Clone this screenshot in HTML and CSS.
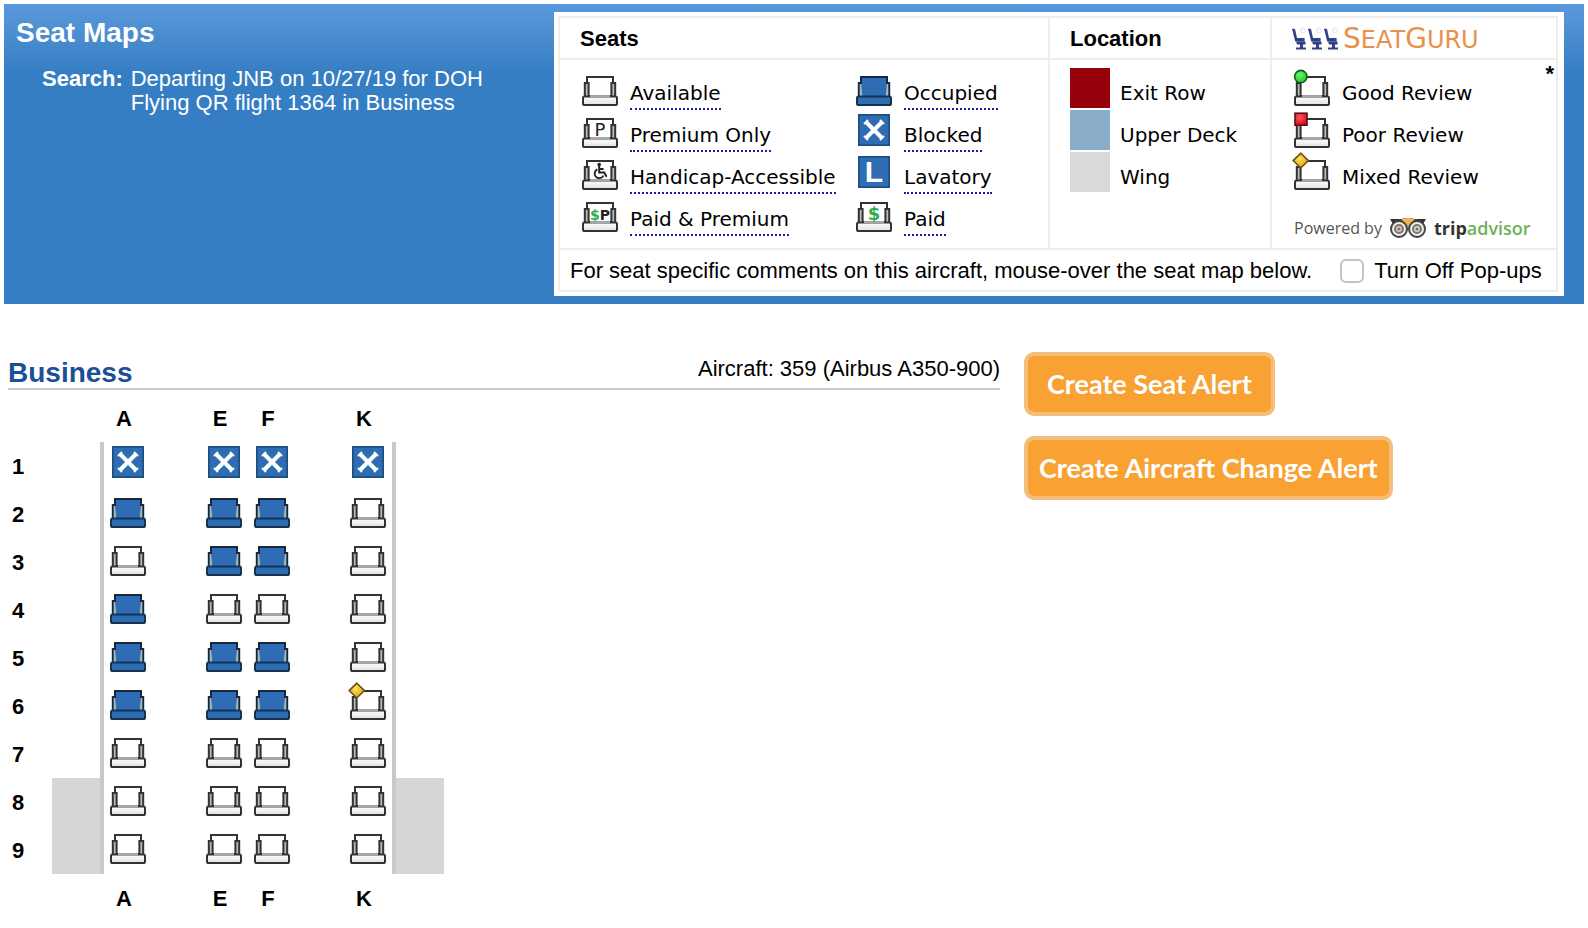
FILE: index.html
```
<!DOCTYPE html>
<html lang="en">
<head>
    <meta charset="UTF-8">
    <meta name="viewport" content="width=device-width, initial-scale=1.0">
    <title>Seat Maps</title>
    <link rel="stylesheet" href="styles.css">
</head>
<body>

    <!-- Icon shapes, reused by the legend and the seat map -->
    <svg class="sprite" aria-hidden="true">
        <defs>
            <linearGradient id="cushion" x1="0" y1="0" x2="0" y2="1">
                <stop offset="0" stop-color="#ffffff"/>
                <stop offset="1" stop-color="#e2e2e2"/>
            </linearGradient>
            <radialGradient id="gold" cx="0.4" cy="0.35" r="0.7">
                <stop offset="0" stop-color="#ffe35a"/>
                <stop offset="1" stop-color="#d9a010"/>
            </radialGradient>
            <radialGradient id="green" cx="0.4" cy="0.35" r="0.7">
                <stop offset="0" stop-color="#6cf56c"/>
                <stop offset="1" stop-color="#1fc42c"/>
            </radialGradient>
            <radialGradient id="red" cx="0.4" cy="0.35" r="0.7">
                <stop offset="0" stop-color="#ff5560"/>
                <stop offset="1" stop-color="#d20a18"/>
            </radialGradient>
        </defs>
        <symbol id="open" viewBox="0 0 20 20">
            <path d="M3.5 8V4.5h13V8" fill="#fff" stroke="#333"/>
            <path d="M2.4 14.5V7.5H4.3V13.5L5.2 14.5M17.6 14.5V7.5H15.7V13.5L14.800 14.5" fill="#bbb" stroke="#333"/>
            <rect x="1.5" y="14.2" width="17" height="4.3" rx="0.8" fill="url(#cushion)" stroke="#333"/>
            <path d="M5 14.2H15" stroke="#aaa" stroke-width="1.1"/>
        </symbol>
        <symbol id="taken" viewBox="0 0 20 20">
            <rect x="3" y="6" width="14" height="9" fill="#a9b8c6"/>
            <path d="M3.5 7V4.5h13V7l-.6 7H4.1z" fill="#2e6db3"/>
            <path d="M2.4 14.5V7.5H3.5V4.5H16.5V7.5H17.6V14.5" fill="none" stroke="#152a42"/>
            <rect x="1.5" y="14.3" width="17" height="4.2" rx="0.8" fill="#2e6db3" stroke="#16324f"/>
        </symbol>
        <symbol id="box" viewBox="0 0 20 20">
            <rect x="2.4" y="2.4" width="15.2" height="15.2" fill="#2e6db3" stroke="#1f4c80" stroke-width="0.8"/>
        </symbol>
        <symbol id="blocked" viewBox="0 0 20 20">
            <use href="#box"/>
            <path d="M6 6l8 8M14 6l-8 8" stroke="#fff" stroke-width="2"/>
            <path d="M5 7l2-2M15 7l-2-2M5 13l2 2M15 13l-2 2" stroke="#fff" stroke-width="1"/>
        </symbol>
        <symbol id="mixed" viewBox="0 0 20 20">
            <use href="#open"/>
            <path d="M4.400 .6L8.200 4.300 4.400 8 .600 4.300z" fill="url(#gold)" stroke="#6b5314" stroke-width="0.8"/>
        </symbol>
        <symbol id="good" viewBox="0 0 20 20">
            <use href="#open"/>
            <circle cx="4.4" cy="4.3" r="3.1" fill="url(#green)" stroke="#155c1d" stroke-width="0.8"/>
        </symbol>
        <symbol id="poor" viewBox="0 0 20 20">
            <use href="#open"/>
            <rect x="1.5" y="1.6" width="6" height="6" fill="url(#red)" stroke="#5c1015" stroke-width="0.8"/>
        </symbol>
    </svg>

    <header class="banner">
        <div class="search">
            <h1>Seat Maps</h1>
            <dl>
                <dt>Search:</dt>
                <dd>Departing JNB on 10/27/19 for DOH<br>Flying QR flight 1364 in Business</dd>
            </dl>
        </div>

        <div class="legend">
            <div class="legend-grid">
                <h2>Seats</h2>
                <h2>Location</h2>
                <div class="seatguru">
                    <svg class="chairs" viewBox="0 0 48 24" aria-hidden="true">
                        <g id="chair">
                            <path d="M0 1.500l3 .5 2 9h7.600v3.500H3.200z" fill="#2f4088"/>
                            <path d="M4 14.500h9.500v3H5zM8 17h3v4H8zM4 20.500h10v2H4z" fill="#2f4088"/>
                            <circle cx="11" cy="3.500" r="2.300" fill="none" stroke="#dfe3ea"/>
                        </g>
                        <use href="#chair" x="16"/>
                        <use href="#chair" x="32"/>
                    </svg>
                    <span class="guru"><b>S</b>EAT<b>G</b>URU</span>
                </div>

                <div class="cell seats">
                    <div class="item">
                        <svg class="icon"><use href="#open"/></svg>
                        <a href="#">Available</a>
                    </div>
                    <div class="item">
                        <svg class="icon"><use href="#taken"/></svg>
                        <a href="#">Occupied</a>
                    </div>
                    <div class="item">
                        <svg class="icon" viewBox="0 0 20 20"><use href="#open"/><text class="mark" x="10" y="13">P</text></svg>
                        <a href="#">Premium Only</a>
                    </div>
                    <div class="item">
                        <svg class="icon"><use href="#blocked"/></svg>
                        <a href="#">Blocked</a>
                    </div>
                    <div class="item">
                        <svg class="icon" viewBox="0 0 20 20">
                            <use href="#open"/>
                            <circle cx="9.6" cy="6.3" r="0.9" fill="#222"/>
                            <path d="M9.6 7v3.2h2.5l1.2 2.2M9.6 8.5h2.2" fill="none" stroke="#222"/>
                            <path d="M8.7 8.7a2.3 2.3 0 1 0 3 3.1" fill="none" stroke="#222" stroke-width="0.9"/>
                        </svg>
                        <a href="#">Handicap-Accessible</a>
                    </div>
                    <div class="item">
                        <svg class="icon" viewBox="0 0 20 20"><use href="#box"/><text class="mark lav" x="10" y="15">L</text></svg>
                        <a href="#">Lavatory</a>
                    </div>
                    <div class="item">
                        <svg class="icon" viewBox="0 0 20 20"><use href="#open"/><text class="mark small" x="10" y="13"><tspan class="cash">$</tspan>P</text></svg>
                        <a href="#">Paid &amp; Premium</a>
                    </div>
                    <div class="item">
                        <svg class="icon" viewBox="0 0 20 20"><use href="#open"/><text class="mark cash" x="10" y="13">$</text></svg>
                        <a href="#">Paid</a>
                    </div>
                </div>

                <div class="cell">
                    <div class="item"><i class="swatch exit"></i><span>Exit Row</span></div>
                    <div class="item"><i class="swatch upper"></i><span>Upper Deck</span></div>
                    <div class="item"><i class="swatch wing-color"></i><span>Wing</span></div>
                </div>

                <div class="cell reviews">
                    <b class="star">*</b>
                    <div class="item"><svg class="icon"><use href="#good"/></svg><span>Good Review</span></div>
                    <div class="item"><svg class="icon"><use href="#poor"/></svg><span>Poor Review</span></div>
                    <div class="item"><svg class="icon"><use href="#mixed"/></svg><span>Mixed Review</span></div>
                    <div class="powered">
                        <span>Powered by</span>
                        <svg class="owl" viewBox="0 0 38 20" aria-hidden="true">
                            <path d="M1 1h11q7-2 14 0h11l-3 5H4z" fill="#333"/>
                            <path d="M12 1q7-2 14 0l-7 8z" fill="#e9b94c"/>
                            <circle cx="10" cy="11" r="8" fill="#eee" stroke="#444" stroke-width="2"/>
                            <circle cx="28" cy="11" r="8" fill="#eee" stroke="#444" stroke-width="2"/>
                            <circle cx="10" cy="11" r="4" fill="#e3c4bd" stroke="#777" stroke-width="2"/>
                            <circle cx="28" cy="11" r="4" fill="#cfdccb" stroke="#777" stroke-width="2"/>
                            <circle cx="10" cy="11" r="1.500" fill="#a0625a"/>
                            <circle cx="28" cy="11" r="1.500" fill="#5d7d5b"/>
                        </svg>
                        <span class="trip">trip<span class="advisor">advisor</span></span>
                    </div>
                </div>

                <div class="note">
                    <span>For seat specific comments on this aircraft, mouse-over the seat map below.</span>
                    <input type="checkbox" id="popups">
                    <label for="popups">Turn Off Pop-ups</label>
                </div>
            </div>
        </div>
    </header>

    <main>
        <section class="cabin">
            <div class="cabin-title">
                <h2>Business</h2>
                <span>Aircraft: 359 (Airbus A350-900)</span>
            </div>

            <table class="map">
                <colgroup>
                    <col class="num"><col class="side"><col span="6"><col class="side">
                </colgroup>
                <thead>
                    <tr><td></td><td></td><th>A</th><td></td><th>E</th><th>F</th><td></td><th>K</th><td></td></tr>
                </thead>
                <tbody>
                    <tr>
                        <th>1</th><td class="left"></td>
                        <td><svg class="icon"><use href="#blocked"/></svg></td><td></td>
                        <td><svg class="icon"><use href="#blocked"/></svg></td>
                        <td><svg class="icon"><use href="#blocked"/></svg></td><td></td>
                        <td><svg class="icon"><use href="#blocked"/></svg></td><td class="right"></td>
                    </tr>
                    <tr>
                        <th>2</th><td class="left"></td>
                        <td><svg class="icon"><use href="#taken"/></svg></td><td></td>
                        <td><svg class="icon"><use href="#taken"/></svg></td>
                        <td><svg class="icon"><use href="#taken"/></svg></td><td></td>
                        <td><svg class="icon"><use href="#open"/></svg></td><td class="right"></td>
                    </tr>
                    <tr>
                        <th>3</th><td class="left"></td>
                        <td><svg class="icon"><use href="#open"/></svg></td><td></td>
                        <td><svg class="icon"><use href="#taken"/></svg></td>
                        <td><svg class="icon"><use href="#taken"/></svg></td><td></td>
                        <td><svg class="icon"><use href="#open"/></svg></td><td class="right"></td>
                    </tr>
                    <tr>
                        <th>4</th><td class="left"></td>
                        <td><svg class="icon"><use href="#taken"/></svg></td><td></td>
                        <td><svg class="icon"><use href="#open"/></svg></td>
                        <td><svg class="icon"><use href="#open"/></svg></td><td></td>
                        <td><svg class="icon"><use href="#open"/></svg></td><td class="right"></td>
                    </tr>
                    <tr>
                        <th>5</th><td class="left"></td>
                        <td><svg class="icon"><use href="#taken"/></svg></td><td></td>
                        <td><svg class="icon"><use href="#taken"/></svg></td>
                        <td><svg class="icon"><use href="#taken"/></svg></td><td></td>
                        <td><svg class="icon"><use href="#open"/></svg></td><td class="right"></td>
                    </tr>
                    <tr>
                        <th>6</th><td class="left"></td>
                        <td><svg class="icon"><use href="#taken"/></svg></td><td></td>
                        <td><svg class="icon"><use href="#taken"/></svg></td>
                        <td><svg class="icon"><use href="#taken"/></svg></td><td></td>
                        <td><svg class="icon"><use href="#mixed"/></svg></td><td class="right"></td>
                    </tr>
                    <tr>
                        <th>7</th><td class="left"></td>
                        <td><svg class="icon"><use href="#open"/></svg></td><td></td>
                        <td><svg class="icon"><use href="#open"/></svg></td>
                        <td><svg class="icon"><use href="#open"/></svg></td><td></td>
                        <td><svg class="icon"><use href="#open"/></svg></td><td class="right"></td>
                    </tr>
                    <tr>
                        <th>8</th><td class="left wing"></td>
                        <td><svg class="icon"><use href="#open"/></svg></td><td></td>
                        <td><svg class="icon"><use href="#open"/></svg></td>
                        <td><svg class="icon"><use href="#open"/></svg></td><td></td>
                        <td><svg class="icon"><use href="#open"/></svg></td><td class="right wing"></td>
                    </tr>
                    <tr>
                        <th>9</th><td class="left wing"></td>
                        <td><svg class="icon"><use href="#open"/></svg></td><td></td>
                        <td><svg class="icon"><use href="#open"/></svg></td>
                        <td><svg class="icon"><use href="#open"/></svg></td><td></td>
                        <td><svg class="icon"><use href="#open"/></svg></td><td class="right wing"></td>
                    </tr>
                </tbody>
                <tfoot>
                    <tr><td></td><td></td><th>A</th><td></td><th>E</th><th>F</th><td></td><th>K</th><td></td></tr>
                </tfoot>
            </table>
        </section>

        <div class="alerts">
            <button type="button">Create Seat Alert</button>
            <button type="button">Create Aircraft Change Alert</button>
        </div>
    </main>

</body>
</html>
```
FILE: styles.css
```
* {
    box-sizing: border-box;
}

body {
    margin: 4px;
    background: #fff;
    color: #000;
    font: 22px/24px "Liberation Sans", Arial, sans-serif;
}

h1, h2, dl, dd {
    margin: 0;
}

.sprite {
    position: absolute;
    width: 0;
    height: 0;
}

.icon {
    display: block;
    width: 40px;
    height: 40px;
    flex: none;
}

/* Blue banner */
.banner {
    display: flex;
    justify-content: space-between;
    padding: 8px 20px 8px 12px;
    background: #367ec4 linear-gradient(#5899dd, #4f90d2 24px, #367ec4 68px);
}

.search {
    color: #fff;
}

.search h1 {
    margin: 5px 0 18px;
    font-size: 28px;
    line-height: 32px;
}

.search dl {
    display: flex;
    gap: 8px;
    padding-left: 26px;
}

.search dt {
    font-weight: bold;
}

/* Legend */
.legend {
    flex: 0 1 1010px;
    padding: 4px 6px 4px 4px;
    background: #fff;
}

.legend-grid {
    display: grid;
    grid-template-columns: 490fr 222fr 284fr;
    border: 2px solid #eee;
}

.legend h2, .seatguru {
    height: 42px;
    padding-left: 20px;
    border-bottom: 2px solid #eee;
    font-size: 22px;
    line-height: 42px;
}

.legend h2, .cell {
    border-right: 2px solid #eee;
}

.cell {
    padding: 8px 0 12px 20px;
    font: 20px/24px Verdana, "DejaVu Sans", sans-serif;
}

.seats {
    display: grid;
    grid-template-columns: 274px 1fr;
}

.item {
    display: flex;
    gap: 10px;
    height: 42px;
}

.item a, .item span {
    align-self: flex-end;
    padding-bottom: 3px;
    border-bottom: 2px dotted transparent;
    color: #000;
    text-decoration: none;
    white-space: nowrap;
}

.item a {
    border-color: #1c1ca8;
}

.mark {
    font: 9px "DejaVu Sans", sans-serif;
    text-anchor: middle;
    fill: #222;
}

.small {
    font-size: 7px;
    font-weight: bold;
}

.lav {
    font: bold 15px "Liberation Sans", Arial, sans-serif;
    fill: #fff;
}

.cash {
    font-weight: bold;
    fill: #2fae4e;
}

.swatch {
    width: 40px;
    height: 40px;
}

.exit {
    background: #97010b;
}

.upper {
    background: #8aaec9;
}

.wing-color {
    background: #d9d9d9;
}

.seatguru {
    display: flex;
    align-items: center;
    gap: 3px;
    padding-top: 2px;
}

.chairs {
    width: 48px;
    height: 24px;
}

.guru {
    color: #e8914a;
    font: 24px/36px "DejaVu Sans", sans-serif;
}

.guru b {
    font-size: 28px;
    font-weight: normal;
}

.reviews {
    position: relative;
    padding-bottom: 0;
    border-right: 0;
}

.star {
    position: absolute;
    top: 2px;
    right: 2px;
    font: bold 22px/24px "Liberation Sans", Arial, sans-serif;
}

.powered {
    display: flex;
    align-items: center;
    gap: 7px;
    height: 54px;
    padding: 14px 0 0 2px;
    color: #555;
    font: 18px/24px "Open Sans", sans-serif;
}

.powered > span:first-child {
    font-size: 16px;
}

.owl {
    width: 38px;
    height: 20px;
}

.trip {
    color: #333;
    font-weight: bold;
}

.advisor {
    color: #6db257;
    font-weight: 600;
}

.note {
    grid-column: 1 / -1;
    display: flex;
    align-items: center;
    height: 42px;
    padding: 2px 0 0 10px;
    border-top: 2px solid #eee;
}

.note input {
    appearance: none;
    width: 24px;
    height: 24px;
    margin: 0 10px 0 28px;
    border: 2px solid #c4c4c4;
    border-radius: 6px;
    background: #fff;
}

.note input:checked {
    background: #367ec4;
}

/* Seat map */
main {
    display: flex;
    gap: 24px;
    padding: 48px 4px 0;
}

.cabin {
    flex: 0 1 992px;
}

.cabin-title {
    display: flex;
    justify-content: space-between;
    height: 38px;
    border-bottom: 2px solid #ccc;
    line-height: 34px;
}

.cabin-title h2 {
    color: #1b5099;
    font-size: 28px;
    line-height: 42px;
}

.map {
    width: 436px;
    margin-top: 4px;
    border-spacing: 0;
    table-layout: fixed;
}

.map .num {
    width: 44px;
}

.map .side {
    width: 52px;
}

.map tr {
    height: 48px;
}

.map td {
    padding: 0 4px;
    vertical-align: top;
}

.map th {
    padding: 2px 8px 0 0;
}

.map tbody th {
    padding: 2px 0 0 4px;
    text-align: left;
}

.map .left {
    border-right: 4px solid #c9c9c9;
}

.map .right {
    border-left: 4px solid #c9c9c9;
}

.wing {
    background: #d6d6d6;
}

/* Alert buttons */
.alerts {
    display: flex;
    flex-direction: column;
    align-items: flex-start;
    gap: 20px;
}

.alerts button {
    height: 64px;
    padding: 0 19px;
    border: 4px solid #f3be7c;
    border-radius: 10px;
    background: #f9a132;
    color: #fff;
    font: bold 27px/32px Lato, sans-serif;
    white-space: nowrap;
    cursor: pointer;
}

.alerts button + button {
    padding: 0 11px;
}

.alerts button:hover {
    background: #f08f14;
}
```
